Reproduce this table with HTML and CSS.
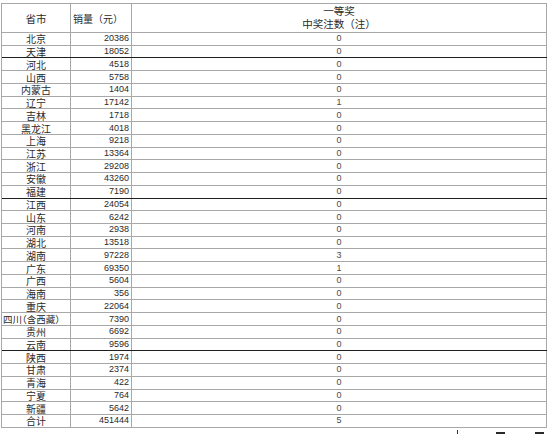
FILE: index.html
```html
<!DOCTYPE html>
<html lang="zh">
<head>
<meta charset="utf-8">
<title>一等奖中奖注数</title>
<link rel="stylesheet" href="styles.css">
</head>
<body>
<div class="sheet">
  <div class="row head">
    <div class="cell c1">省市</div>
    <div class="cell c2 hl">销量（元）</div>
    <div class="cell c3 two"><span>一等奖</span><span>中奖注数（注）</span></div>
  </div>
  <div class="row"><div class="cell c1">北京</div><div class="cell c2 num">20386</div><div class="cell c3 num">0</div></div>
  <div class="row dark"><div class="cell c1">天津</div><div class="cell c2 num">18052</div><div class="cell c3 num">0</div></div>
  <div class="row"><div class="cell c1">河北</div><div class="cell c2 num">4518</div><div class="cell c3 num">0</div></div>
  <div class="row"><div class="cell c1">山西</div><div class="cell c2 num">5758</div><div class="cell c3 num">0</div></div>
  <div class="row"><div class="cell c1">内蒙古</div><div class="cell c2 num">1404</div><div class="cell c3 num">0</div></div>
  <div class="row"><div class="cell c1">辽宁</div><div class="cell c2 num">17142</div><div class="cell c3 num">1</div></div>
  <div class="row"><div class="cell c1">吉林</div><div class="cell c2 num">1718</div><div class="cell c3 num">0</div></div>
  <div class="row"><div class="cell c1">黑龙江</div><div class="cell c2 num">4018</div><div class="cell c3 num">0</div></div>
  <div class="row"><div class="cell c1">上海</div><div class="cell c2 num">9218</div><div class="cell c3 num">0</div></div>
  <div class="row"><div class="cell c1">江苏</div><div class="cell c2 num">13364</div><div class="cell c3 num">0</div></div>
  <div class="row"><div class="cell c1">浙江</div><div class="cell c2 num">29208</div><div class="cell c3 num">0</div></div>
  <div class="row"><div class="cell c1">安徽</div><div class="cell c2 num">43260</div><div class="cell c3 num">0</div></div>
  <div class="row dark"><div class="cell c1">福建</div><div class="cell c2 num">7190</div><div class="cell c3 num">0</div></div>
  <div class="row"><div class="cell c1">江西</div><div class="cell c2 num">24054</div><div class="cell c3 num">0</div></div>
  <div class="row"><div class="cell c1">山东</div><div class="cell c2 num">6242</div><div class="cell c3 num">0</div></div>
  <div class="row"><div class="cell c1">河南</div><div class="cell c2 num">2938</div><div class="cell c3 num">0</div></div>
  <div class="row"><div class="cell c1">湖北</div><div class="cell c2 num">13518</div><div class="cell c3 num">0</div></div>
  <div class="row"><div class="cell c1">湖南</div><div class="cell c2 num">97228</div><div class="cell c3 num">3</div></div>
  <div class="row"><div class="cell c1">广东</div><div class="cell c2 num">69350</div><div class="cell c3 num">1</div></div>
  <div class="row"><div class="cell c1">广西</div><div class="cell c2 num">5604</div><div class="cell c3 num">0</div></div>
  <div class="row"><div class="cell c1">海南</div><div class="cell c2 num">356</div><div class="cell c3 num">0</div></div>
  <div class="row"><div class="cell c1">重庆</div><div class="cell c2 num">22064</div><div class="cell c3 num">0</div></div>
  <div class="row"><div class="cell c1 narrow">四川（含西藏）</div><div class="cell c2 num">7390</div><div class="cell c3 num">0</div></div>
  <div class="row"><div class="cell c1">贵州</div><div class="cell c2 num">6692</div><div class="cell c3 num">0</div></div>
  <div class="row dark"><div class="cell c1">云南</div><div class="cell c2 num">9596</div><div class="cell c3 num">0</div></div>
  <div class="row"><div class="cell c1">陕西</div><div class="cell c2 num">1974</div><div class="cell c3 num">0</div></div>
  <div class="row"><div class="cell c1">甘肃</div><div class="cell c2 num">2374</div><div class="cell c3 num">0</div></div>
  <div class="row"><div class="cell c1">青海</div><div class="cell c2 num">422</div><div class="cell c3 num">0</div></div>
  <div class="row"><div class="cell c1">宁夏</div><div class="cell c2 num">764</div><div class="cell c3 num">0</div></div>
  <div class="row"><div class="cell c1">新疆</div><div class="cell c2 num">5642</div><div class="cell c3 num">0</div></div>
  <div class="row"><div class="cell c1">合计</div><div class="cell c2 num">451444</div><div class="cell c3 num">5</div></div>
</div>
<div class="marks">
  <span class="tick"></span>
  <span class="bar"></span>
  <span class="bar"></span>
</div>
</body>
</html>
```
FILE: styles.css
```css
html, body {
  margin: 0;
  padding: 0;
  background: #ffffff;
}
body {
  font-family: "Noto Sans CJK SC", "Liberation Sans", sans-serif;
  color: #2a2a2a;
}
.sheet {
  margin: 3px 0 0 1px;
  width: 546px;
  box-sizing: border-box;
  border-top: 1px solid #a8a8a8;
  border-left: 1px solid #a8a8a8;
}
.row {
  display: grid;
  grid-template-columns: 69px 61px 1fr;
  height: 12.74px;
  box-sizing: border-box;
  border-bottom: 1px solid #a8a8a8;
}
.row.dark {
  border-bottom-color: #1e1e1e;
}
.row.head {
  height: 29px;
}
.cell {
  border-right: 1px solid #a8a8a8;
  display: flex;
  align-items: center;
  font-size: 10px;
  line-height: 11px;
  white-space: nowrap;
}
.c1 {
  justify-content: center;
}
.c1.narrow {
  justify-content: flex-start;
  padding-left: 1px;
  font-size: 9.5px;
  font-feature-settings: "halt";
}
.c2 {
  justify-content: flex-end;
  padding-right: 2px;
}
.c3 {
  justify-content: center;
}
.num {
  font-family: "Liberation Sans", sans-serif;
  font-size: 9px;
}
.c3.num {
  color: #4a4a4a;
}
.head .cell {
  font-size: 10.5px;
}
.head .c2.hl {
  justify-content: flex-start;
  padding-left: 2px;
  padding-right: 0;
  font-size: 10px;
}
.head .c3.two {
  flex-direction: column;
  justify-content: space-between;
  padding: 1px 0 2px;
  line-height: 12px;
}
.marks {
  display: flex;
  align-items: flex-end;
  height: 7px;
  padding-left: 447px;
}
.tick {
  width: 22px;
  height: 4px;
  position: relative;
  border-bottom: 1px solid #333;
  margin-top: 2px;
}
.tick::before {
  content: "";
  position: absolute;
  left: 10px;
  top: 0;
  width: 1px;
  height: 4px;
  background: #333;
}
.bar {
  width: 9px;
  height: 3px;
  background: #2a2a2a;
  margin-left: 27px;
}
.bar + .bar {
  margin-left: 30px;
}
```
